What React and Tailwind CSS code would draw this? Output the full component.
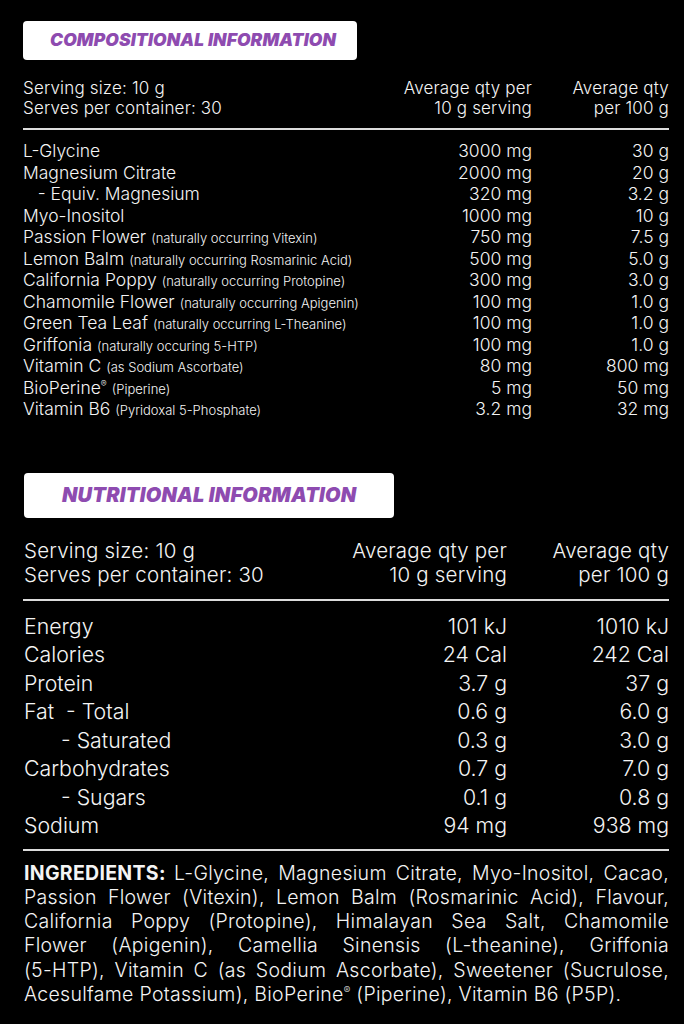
const composition = [
  ["L-Glycine", "", "3000 mg", "30 g"],
  ["Magnesium Citrate", "", "2000 mg", "20 g"],
  ["\u00a0\u00a0\u00a0- Equiv. Magnesium", "", "320 mg", "3.2 g"],
  ["Myo-Inositol", "", "1000 mg", "10 g"],
  ["Passion Flower", "(naturally occurring Vitexin)", "750 mg", "7.5 g"],
  ["Lemon Balm", "(naturally occurring Rosmarinic Acid)", "500 mg", "5.0 g"],
  ["California Poppy", "(naturally occurring Protopine)", "300 mg", "3.0 g"],
  ["Chamomile Flower", "(naturally occurring Apigenin)", "100 mg", "1.0 g"],
  ["Green Tea Leaf", "(naturally occurring L-Theanine)", "100 mg", "1.0 g"],
  ["Griffonia", "(naturally occuring 5-HTP)", "100 mg", "1.0 g"],
  ["Vitamin C", "(as Sodium Ascorbate)", "80 mg", "800 mg"],
  ["BioPerine", "(Piperine)", "5 mg", "50 mg"],
  ["Vitamin B6", "(Pyridoxal 5-Phosphate)", "3.2 mg", "32 mg"],
];

const nutrition = [
  ["Energy", "101 kJ", "1010 kJ", false],
  ["Calories", "24 Cal", "242 Cal", false],
  ["Protein", "3.7 g", "37 g", false],
  ["Fat\u00a0 - Total", "0.6 g", "6.0 g", false],
  ["- Saturated", "0.3 g", "3.0 g", true],
  ["Carbohydrates", "0.7 g", "7.0 g", false],
  ["- Sugars", "0.1 g", "0.8 g", true],
  ["Sodium", "94 mg", "938 mg", false],
];

const Reg = () => <sup className="text-[0.5em] -top-[0.7em]">®</sup>;

const ingredientLines = [
  "L-Glycine, Magnesium Citrate, Myo-Inositol, Cacao,",
  "Passion Flower (Vitexin), Lemon Balm (Rosmarinic Acid), Flavour,",
  "California Poppy (Protopine), Himalayan Sea Salt, Chamomile",
  "Flower (Apigenin), Camellia Sinensis (L-theanine), Griffonia",
  "(5-HTP), Vitamin C (as Sodium Ascorbate), Sweetener (Sucrulose,",
  <>
    Acesulfame Potassium), BioPerine
    <Reg /> (Piperine), Vitamin B6 (P5P).
  </>,
];

function Badge({ children, className }) {
  return (
    <div
      className={`bg-white rounded-[4px] flex items-center text-[#8e4bb0] font-black italic uppercase ${className}`}
    >
      {children}
    </div>
  );
}

export default function App() {
  return (
    <div
      className="bg-black text-[#f4f4f4] w-[684px] h-[1024px] overflow-hidden pl-[23px] pr-[15px] pt-[21px]"
      style={{ fontFamily: "Inter, 'Open Sans', sans-serif" }}
    >
      <Badge className="w-[334px] h-[39px] pl-[27px] text-[17.5px] tracking-[0.005em]">
        Compositional Information
      </Badge>

      <div className="grid grid-cols-[1fr_140px_137px] text-[17px] leading-[20px] tracking-[0.01em] mt-[18px] font-light">
        <div>
          Serving size: 10 g
          <br />
          Serves per container: 30
        </div>
        <div className="text-right">
          Average qty per
          <br />
          10 g serving
        </div>
        <div className="text-right">
          Average qty
          <br />
          per 100 g
        </div>
      </div>
      <div className="h-[2px] bg-[#dcdcdc] mt-[10px]" />

      <div className="mt-[8px]">
        {composition.map(([name, note, per, per100]) => (
          <div
            key={name}
            className="grid grid-cols-[1fr_140px_137px] h-[21.5px] items-center text-[17.5px] font-light"
          >
            <div className="whitespace-nowrap">
              {name}
              {name === "BioPerine" && <Reg />}
              {note && <span className="text-[13px] ml-[5px]">{note}</span>}
            </div>
            <div className="text-right">{per}</div>
            <div className="text-right">{per100}</div>
          </div>
        ))}
      </div>

      <Badge className="w-[370px] h-[45px] pl-[38px] text-[20px] tracking-[0.01em] mt-[55px] ml-[1px]">
        Nutritional Information
      </Badge>

      <div className="grid grid-cols-[1fr_160px_162px] text-[20.5px] leading-[24px] tracking-[0.01em] mt-[21px] font-light pl-[1px]">
        <div>
          Serving size: 10 g
          <br />
          Serves per container: 30
        </div>
        <div className="text-right">
          Average qty per
          <br />
          10 g serving
        </div>
        <div className="text-right">
          Average qty
          <br />
          per 100 g
        </div>
      </div>
      <div className="h-[2px] bg-[#dcdcdc] mt-[12px]" />

      <div className="mt-[10px]">
        {nutrition.map(([name, per, per100, indent]) => (
          <div
            key={name}
            className="grid grid-cols-[1fr_160px_162px] h-[28.5px] items-center text-[21.3px] font-light pl-[1px]"
          >
            <div className={indent ? "pl-[37px]" : ""}>{name}</div>
            <div className="text-right">{per}</div>
            <div className="text-right">{per100}</div>
          </div>
        ))}
      </div>
      <div className="h-[2px] bg-[#dcdcdc] mt-[10px]" />

      <div className="mt-[10px] text-[19.5px] leading-[24.3px] tracking-[0.015em] font-light pl-[1px]">
        {ingredientLines.map((line, i) => (
          <div
            key={i}
            className={
              i < ingredientLines.length - 1
                ? "whitespace-nowrap text-justify [text-align-last:justify]"
                : "whitespace-nowrap"
            }
          >
            {i === 0 && <span className="font-bold">INGREDIENTS: </span>}
            {line}
          </div>
        ))}
      </div>
    </div>
  );
}
